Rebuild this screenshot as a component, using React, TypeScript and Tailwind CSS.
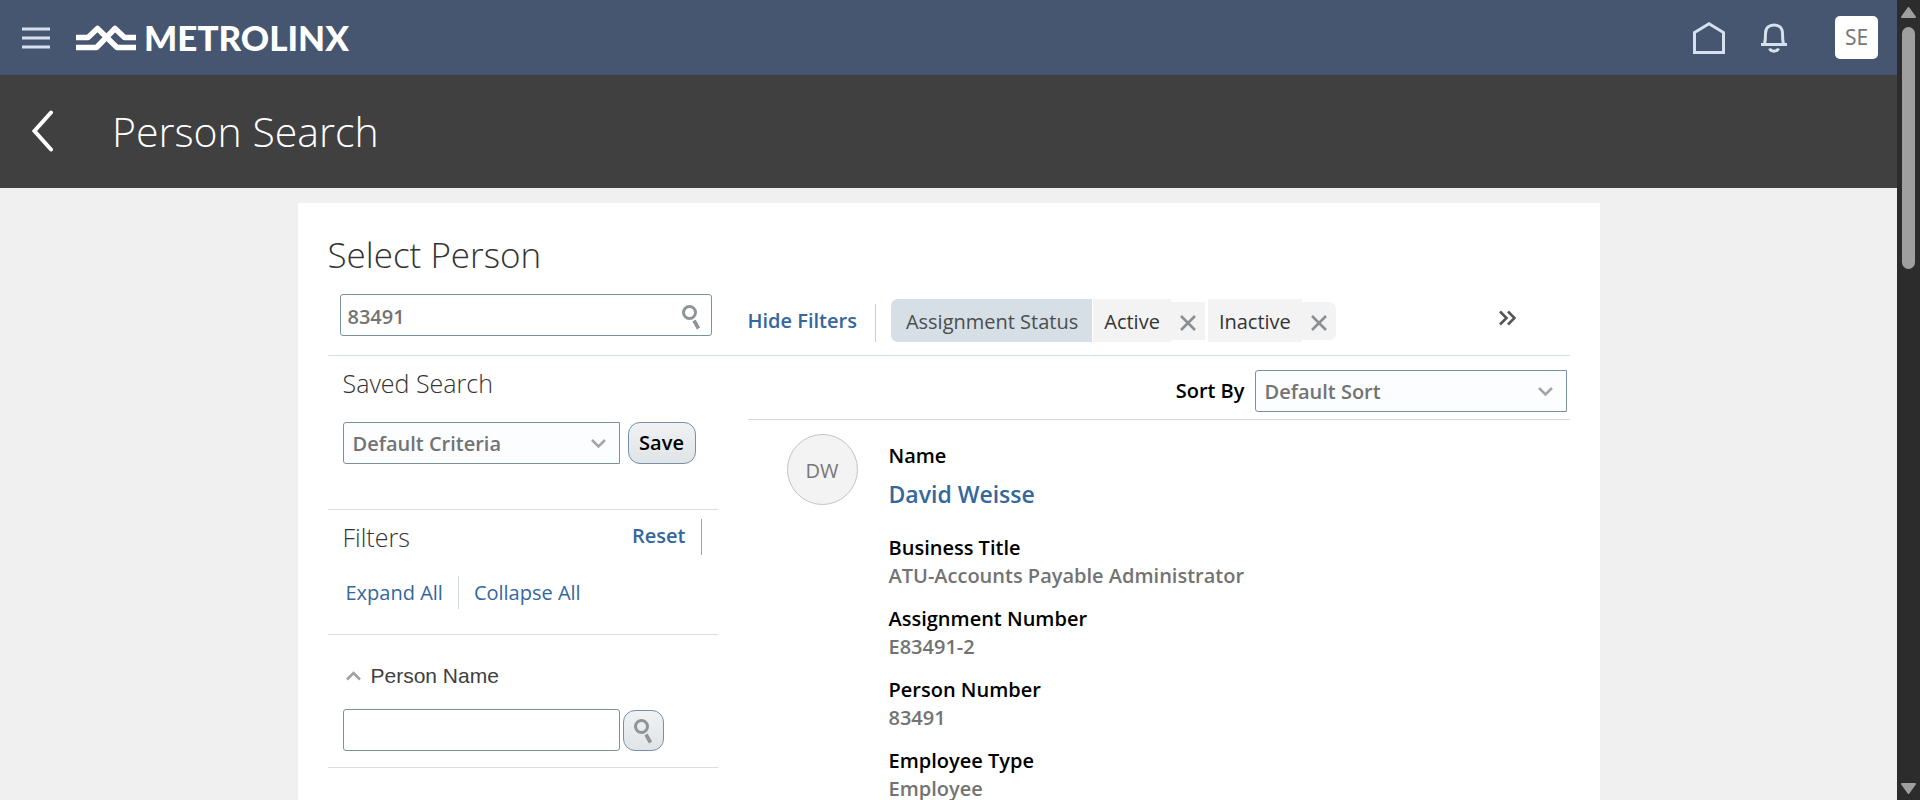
import React, { useState } from "react";

const details = [
  { label: "Business Title", value: "ATU-Accounts Payable Administrator" },
  { label: "Assignment Number", value: "E83491-2" },
  { label: "Person Number", value: "83491" },
  { label: "Employee Type", value: "Employee" },
];

function SearchIcon() {
  return (
    <svg width="20" height="26" viewBox="0 0 20 26" fill="none" stroke="#8f9497" aria-hidden="true">
      <circle cx="8.5" cy="8.5" r="6" strokeWidth="3" />
      <path d="M13 16.500 17.500 24.500" strokeWidth="3.600" />
    </svg>
  );
}

function ChevronDown() {
  return (
    <svg className="pointer-events-none absolute right-3.5 top-4" width="15" height="11" viewBox="0 0 15 11" fill="none" stroke="#a6a6a6" strokeWidth="2.600" aria-hidden="true">
      <path d="M1 2 7.500 8.500 14 2" />
    </svg>
  );
}

function Select({ id, label, option, className }: { id: string; label?: string; option: string; className: string }) {
  return (
    <div className={`relative ${className}`}>
      <select
        id={id}
        aria-label={label}
        className="h-[42px] w-full appearance-none rounded-l-[3px] border border-[#7b919e] bg-[#fbfdff] pl-[9px] pr-10 pt-0.5 text-[20px] font-semibold text-[#737373]"
      >
        <option>{option}</option>
      </select>
      <ChevronDown />
    </div>
  );
}

function FilterChip({ label, last }: { label: string; last?: boolean }) {
  return (
    <li className="flex items-center">
      <span className="flex h-[43px] items-center bg-[#f3f3f3] px-[11px] pt-0.5 text-[20px] text-[#333]">{label}</span>
      <button
        type="button"
        aria-label={`Remove ${label}`}
        className={`flex h-[38px] w-[34px] items-center justify-center bg-[#f3f3f3] pt-1 ${last ? "rounded-r-[7px]" : ""}`}
      >
        <svg width="16" height="16" viewBox="0 0 16 16" stroke="#8c8f92" strokeWidth="2.600" aria-hidden="true">
          <path d="M1 1 15 15M15 1 1 15" />
        </svg>
      </button>
    </li>
  );
}

function TopBar() {
  return (
    <header className="flex h-[75px] shrink-0 items-center bg-[#465671] pl-[22px] pr-[19px]">
      <button type="button" aria-label="Navigator">
        <svg width="28" height="22" viewBox="0 0 28 22" stroke="#d7e0ee" strokeWidth="3" aria-hidden="true">
          <path d="M0 2H28M0 11H28M0 20H28" />
        </svg>
      </button>
      <a href="#" className="ml-[26px] flex items-center gap-2" aria-label="Metrolinx">
        <svg width="60" height="26" viewBox="0 0 60 26" fill="none" stroke="#fff" strokeWidth="5.500" strokeLinejoin="round" aria-hidden="true">
          <path d="M0 12.500H12L21.500 3.500 41 22.500H60" />
          <path d="M0 22.500H20.500L39 3.500 48.500 12.500H60" />
        </svg>
        <span className="pb-0.5 font-[Lato] text-[35px] font-black leading-[40px] text-white">METROLINX</span>
      </a>
      <div className="ml-auto flex items-center">
        <a href="#" aria-label="Home">
          <svg width="32" height="32" viewBox="0 0 32 32" fill="none" stroke="#d7e0ee" strokeWidth="3" aria-hidden="true">
            <path d="M1.500 30.500V10.500L16 1.800 30.500 10.500V30.500Z" />
          </svg>
        </a>
        <button type="button" aria-label="Notifications" className="ml-9">
          <svg width="26" height="30" viewBox="0 0 26 30" fill="none" stroke="#d7e0ee" strokeWidth="3" aria-hidden="true">
            <path d="M0 21.500H26M3.500 21.500C4.500 17 4.500 15 4.500 10.500 4.500 5 8 2 13 2 18 2 21.500 5 21.500 10.500 21.500 15 21.500 17 22.500 21.500" />
            <path d="M8.500 25.500C10 29 16 29 17.500 25.500" />
          </svg>
        </button>
        <button type="button" aria-label="Settings and actions" className="ml-12 size-[43px] rounded-[5px] bg-white font-['Noto_Sans'] text-[21px] text-[#777]">
          SE
        </button>
      </div>
    </header>
  );
}

function TitleBar() {
  return (
    <div className="flex h-[113px] shrink-0 items-center bg-[#404040] pb-0.5 pl-8">
      <button type="button" aria-label="Back">
        <svg width="22" height="42" viewBox="0 0 22 42" fill="none" stroke="#fff" strokeWidth="4" strokeLinecap="round" aria-hidden="true">
          <path d="M19 2.500 2.500 21 19 39.500" />
        </svg>
      </button>
      <h1 className="ml-[58px] text-[41px] font-light leading-[56px] text-white">Person Search</h1>
    </div>
  );
}

function SideFilters() {
  return (
    <aside className="w-[390px] shrink-0">
      <section className="h-[153px] pl-[15px] pt-[11px]">
        <h3 className="text-[25px] font-light leading-[32px] text-[#333]">Saved Search</h3>
        <div className="mt-[23px] flex gap-2">
          <Select id="saved" label="Saved Search" option="Default Criteria" className="w-[277px]" />
          <button type="button" className="h-[42px] w-[68px] rounded-[12px] border border-[#7590aa] bg-linear-to-b from-[#f0f2f4] to-[#e0e4e7] text-[20px] font-semibold text-black">
            Save
          </button>
        </div>
      </section>
      <section className="h-[125px] border-t border-[#d9dfe3] pl-[15px] pt-[9px]">
        <div className="flex items-center justify-between pr-4">
          <h3 className="text-[25px] font-light leading-[36px] text-[#333]">Filters</h3>
          <button type="button" className="h-9 border-r border-[#a8a58c] pb-0.5 pr-[15px] text-[20px] font-semibold text-[#34679e]">Reset</button>
        </div>
        <div className="mt-[21px] flex text-[20px] leading-[33px] text-[#34679e]">
          <button type="button" className="border-r border-[#d3dbe0] pl-[3px] pr-[15px]">Expand All</button>
          <button type="button" className="pl-[15px]">Collapse All</button>
        </div>
      </section>
      <section className="h-[134px] border-y border-[#d9dfe3] pl-[15px] pt-[27px]">
        <label htmlFor="person-name" className="flex items-center font-['Liberation_Sans'] text-[21px] leading-[28px] text-[#404040]">
          <svg className="ml-[3px] mr-[10px]" width="15" height="10" viewBox="0 0 15 10" fill="none" stroke="#a0a0a0" strokeWidth="2.500" aria-hidden="true">
            <path d="M1 8.500 7.500 2 14 8.500" />
          </svg>
          Person Name
        </label>
        <div className="mt-[19px] flex gap-[3px]">
          <input id="person-name" type="text" className="h-[42px] w-[277px] rounded-[3px] border border-[#7b919e] px-2 text-[20px]" />
          <button type="button" aria-label="Search person name" className="flex size-[41px] items-center justify-center self-end rounded-[12px] border border-[#7590aa] bg-linear-to-b from-[#f0f2f4] to-[#e0e4e7]">
            <SearchIcon />
          </button>
        </div>
      </section>
    </aside>
  );
}

function Results() {
  return (
    <section className="min-w-0 flex-1">
      <div className="flex h-16 items-center justify-end gap-[10px] border-b border-[#d3dae2] pr-[3px] pt-[7px]">
        <label htmlFor="sort" className="text-[20px] font-semibold text-black">Sort By</label>
        <Select id="sort" option="Default Sort" className="w-[312px]" />
      </div>
      <article className="flex pl-[39px]">
        <div className="mt-[14px] flex size-[71px] shrink-0 items-center justify-center rounded-full border border-[#c4c4c4] bg-[#f3f3f3] pt-0.5 text-[20px] text-[#777]">DW</div>
        <dl className="ml-[31px] mt-[22px] whitespace-nowrap text-[20px] font-semibold leading-[28px]">
          <dt className="text-black">Name</dt>
          <dd className="mb-[22px] pt-[6px] text-[23px] leading-[36px]">
            <a href="#" className="text-[#34679e]">David Weisse</a>
          </dd>
          {details.map((d) => (
            <div key={d.label} className="mb-[15px]">
              <dt className="text-black">{d.label}</dt>
              <dd className="text-[#737373]">{d.value}</dd>
            </div>
          ))}
        </dl>
      </article>
    </section>
  );
}

export default function App() {
  const [query, setQuery] = useState("83491");
  return (
    <div className="flex h-screen overflow-hidden bg-[#f0f0f0] font-['Open_Sans','Noto_Sans',sans-serif]">
      <div className="flex min-w-0 flex-1 flex-col overflow-hidden">
        <TopBar />
        <TitleBar />
        <main className="mx-auto mt-[15px] w-full max-w-[1302px] flex-1 bg-white px-[30px] pt-[29px]">
          <h2 className="text-[35px] font-light leading-[46px] text-[#333]">Select Person</h2>
          <div className="flex h-[78px] border-b border-[#d3dde5] pt-4">
            <div className="relative ml-3 h-[42px] w-[372px] shrink-0">
              <input
                type="text"
                aria-label="Search"
                value={query}
                onChange={(e) => setQuery(e.target.value)}
                className="h-full w-full rounded-[3px] border border-[#7b919e] pl-[7px] pr-10 pt-0.5 text-[20px] font-semibold text-[#737373]"
              />
              <button type="button" aria-label="Search" className="absolute right-[11px] top-2.5">
                <SearchIcon />
              </button>
            </div>
            <div className="ml-9 mt-[5px] flex h-[43px] flex-1">
              <button type="button" className="mt-[5px] h-[38px] border-r border-[#cfcfc8] pb-1 pr-[18px] text-[20px] font-semibold text-[#34679e]">Hide Filters</button>
              <span className="ml-[15px] flex items-center rounded-l-[7px] bg-[#d6dfe6] pl-[15px] pr-[14px] pt-0.5 text-[20px] text-[#4d4d4d]">Assignment Status</span>
              <ul className="ml-px flex gap-[3px]">
                <FilterChip label="Active" />
                <FilterChip label="Inactive" last />
              </ul>
              <button type="button" aria-label="More filters" className="ml-auto mr-[54px] mt-[11px] self-start">
                <svg width="17" height="16" viewBox="0 0 17 16" fill="none" stroke="#555" strokeWidth="2.600" aria-hidden="true">
                  <path d="M1 1.500 7.500 8 1 14.500M9 1.500 15.500 8 9 14.500" />
                </svg>
              </button>
            </div>
          </div>
          <div className="flex gap-[30px]">
            <SideFilters />
            <Results />
          </div>
        </main>
      </div>
      <div className="flex w-[23px] shrink-0 flex-col items-center bg-[#2c2c2c] pb-1.5 pt-[7px]" aria-hidden="true">
        <svg width="15" height="11" viewBox="0 0 15 11" fill="#9f9f9f" stroke="#9f9f9f" strokeWidth="2" strokeLinejoin="round">
          <path d="M7.500 1 14 10H1Z" />
        </svg>
        <div className="mt-[9px] h-[242px] w-[13px] rounded-full bg-[#9f9f9f]" />
        <svg className="mt-auto" width="15" height="11" viewBox="0 0 15 11" fill="#9f9f9f" stroke="#9f9f9f" strokeWidth="2" strokeLinejoin="round">
          <path d="M7.500 10 14 1H1Z" />
        </svg>
      </div>
    </div>
  );
}
